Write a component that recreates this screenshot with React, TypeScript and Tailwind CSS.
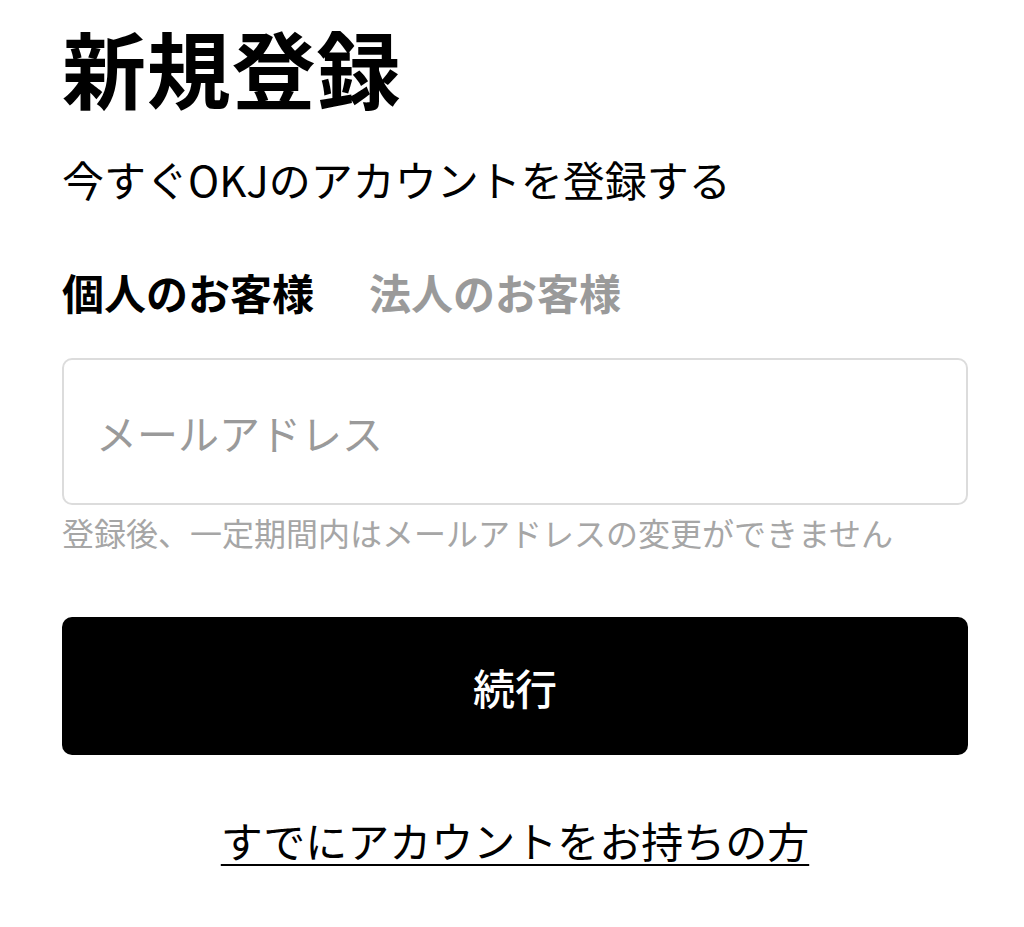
import { useState } from "react";

type Tab = "personal" | "corporate";

const TABS: { id: Tab; label: string }[] = [
  { id: "personal", label: "個人のお客様" },
  { id: "corporate", label: "法人のお客様" },
];

export default function App() {
  const [tab, setTab] = useState<Tab>("personal");
  const [email, setEmail] = useState("");

  return (
    <main
      className="min-h-screen bg-white pl-[62px] pr-[56px] pt-[25px] text-black"
      style={{ fontFamily: '"Noto Sans CJK JP", "Noto Sans", sans-serif' }}
    >
      <h1 className="text-[84px] font-bold leading-[84px] tracking-[0.01em]">新規登録</h1>
      <p className="mt-[49px] text-[42px] leading-[42px] font-normal">今すぐOKJのアカウントを登録する</p>

      <div className="mt-[71px] flex gap-[55px]">
        {TABS.map((t) => (
          <button
            key={t.id}
            type="button"
            onClick={() => setTab(t.id)}
            className={`text-[42px] font-bold leading-[42px] ${tab === t.id ? "text-black" : "text-[#9a9a9a]"}`}
          >
            {t.label}
          </button>
        ))}
      </div>

      <input
        type="email"
        value={email}
        onChange={(e) => setEmail(e.target.value)}
        placeholder="メールアドレス"
        className="mt-[45px] block h-[147px] w-full rounded-[10px] border-2 border-[#dcdcdc] px-[32px] text-[41px] outline-none placeholder:text-[#9a9a9a]"
      />
      <p className="mt-[11px] text-[32px] leading-[32px] text-[#a6a6a6]">
        登録後、一定期間内はメールアドレスの変更ができません
      </p>

      <button
        type="button"
        className="mt-[69px] flex h-[138px] w-full items-center justify-center rounded-[10px] bg-black text-[42px] font-medium text-white"
      >
        続行
      </button>

      <div className="mt-[64px] flex justify-center">
        <a href="#" className="text-[42px] leading-[42px] text-black underline decoration-2 underline-offset-[6px]">
          すでにアカウントをお持ちの方
        </a>
      </div>
    </main>
  );
}
